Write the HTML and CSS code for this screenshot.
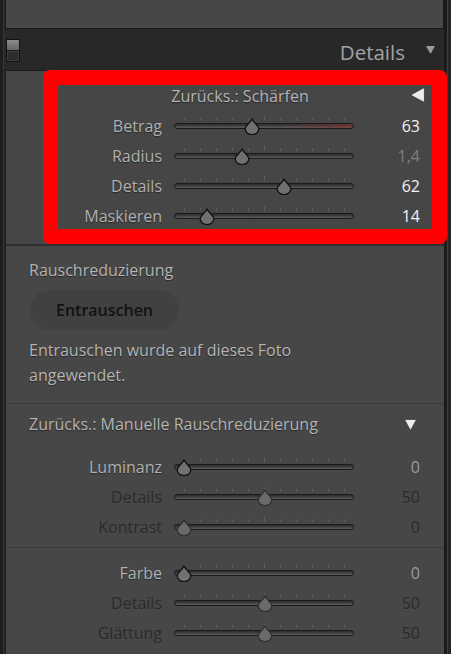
FILE: index.html
```html
<!DOCTYPE html>
<html lang="de">
<head>
<meta charset="utf-8">
<title>Details</title>
<link rel="stylesheet" href="styles.css">
</head>
<body>
<div class="app">
  <div class="col">
    <div class="top-panel"></div>

    <div class="panel-header">
      <div class="toggle"><span class="toggle-top"></span><span class="toggle-bottom"></span></div>
      <span class="panel-title">Details</span>
      <svg class="hdr-tri" width="9" height="9" viewBox="0 0 9 9"><polygon points="0,0 9,0 4.5,8" fill="#9c9c9c"/></svg>
    </div>

    <div class="panel">
      <section class="sec sec-sharpen">
        <div class="sec-head centered">
          <span class="sec-title">Zurücks.: Schärfen</span>
          <svg class="tri-left" width="15" height="16" viewBox="0 0 15 16"><polygon points="0.6,8 14.4,0.6 14.4,15.4" fill="#ececec" stroke="#222" stroke-width="0.6"/></svg>
        </div>
        <div class="row">
          <span class="lbl">Betrag</span>
          <div class="track red"><svg class="thumb" style="left:69px" viewBox="0 0 16 17"><path d="M8 1 C9.5 4.5 14.8 7.5 14.8 11 A6.8 5.6 0 0 1 1.2 11 C1.2 7.5 6.5 4.5 8 1 Z"/></svg></div>
          <span class="val">63</span>
        </div>
        <div class="row">
          <span class="lbl">Radius</span>
          <div class="track"><svg class="thumb" style="left:59px" viewBox="0 0 16 17"><path d="M8 1 C9.5 4.5 14.8 7.5 14.8 11 A6.8 5.6 0 0 1 1.2 11 C1.2 7.5 6.5 4.5 8 1 Z"/></svg></div>
          <span class="val soft">1,4</span>
        </div>
        <div class="row">
          <span class="lbl">Details</span>
          <div class="track"><svg class="thumb" style="left:101px" viewBox="0 0 16 17"><path d="M8 1 C9.5 4.5 14.8 7.5 14.8 11 A6.8 5.6 0 0 1 1.2 11 C1.2 7.5 6.5 4.5 8 1 Z"/></svg></div>
          <span class="val">62</span>
        </div>
        <div class="row">
          <span class="lbl">Maskieren</span>
          <div class="track"><svg class="thumb" style="left:24px" viewBox="0 0 16 17"><path d="M8 1 C9.5 4.5 14.8 7.5 14.8 11 A6.8 5.6 0 0 1 1.2 11 C1.2 7.5 6.5 4.5 8 1 Z"/></svg></div>
          <span class="val">14</span>
        </div>
      </section>

      <section class="sec sec-noise">
        <div class="plain-title">Rauschreduzierung</div>
        <button class="pill" type="button">Entrauschen</button>
        <p class="note">Entrauschen wurde auf dieses Foto<br>angewendet.</p>
      </section>

      <section class="sec sec-manual">
        <div class="sec-head">
          <span class="sec-title left">Zurücks.: Manuelle Rauschreduzierung</span>
          <svg class="tri-down" width="13" height="12" viewBox="0 0 13 12"><polygon points="0.5,0.5 12.5,0.5 6.5,11.5" fill="#ececec" stroke="#222" stroke-width="0.6"/></svg>
        </div>
        <div class="row">
          <span class="lbl">Luminanz</span>
          <div class="track"><svg class="thumb" style="left:1px" viewBox="0 0 16 17"><path d="M8 1 C9.5 4.5 14.8 7.5 14.8 11 A6.8 5.6 0 0 1 1.2 11 C1.2 7.5 6.5 4.5 8 1 Z"/></svg></div>
          <span class="val mid">0</span>
        </div>
        <div class="row off">
          <span class="lbl">Details</span>
          <div class="track"><svg class="thumb" style="left:82px" viewBox="0 0 16 17"><path d="M8 1 C9.5 4.5 14.8 7.5 14.8 11 A6.8 5.6 0 0 1 1.2 11 C1.2 7.5 6.5 4.5 8 1 Z"/></svg></div>
          <span class="val">50</span>
        </div>
        <div class="row off">
          <span class="lbl">Kontrast</span>
          <div class="track"><svg class="thumb" style="left:1px" viewBox="0 0 16 17"><path d="M8 1 C9.5 4.5 14.8 7.5 14.8 11 A6.8 5.6 0 0 1 1.2 11 C1.2 7.5 6.5 4.5 8 1 Z"/></svg></div>
          <span class="val">0</span>
        </div>
      </section>

      <section class="sec sec-color">
        <div class="row">
          <span class="lbl">Farbe</span>
          <div class="track"><svg class="thumb" style="left:1px" viewBox="0 0 16 17"><path d="M8 1 C9.5 4.5 14.8 7.5 14.8 11 A6.8 5.6 0 0 1 1.2 11 C1.2 7.5 6.5 4.5 8 1 Z"/></svg></div>
          <span class="val mid">0</span>
        </div>
        <div class="row off">
          <span class="lbl">Details</span>
          <div class="track"><svg class="thumb" style="left:82px" viewBox="0 0 16 17"><path d="M8 1 C9.5 4.5 14.8 7.5 14.8 11 A6.8 5.6 0 0 1 1.2 11 C1.2 7.5 6.5 4.5 8 1 Z"/></svg></div>
          <span class="val">50</span>
        </div>
        <div class="row off">
          <span class="lbl">Glättung</span>
          <div class="track"><svg class="thumb" style="left:82px" viewBox="0 0 16 17"><path d="M8 1 C9.5 4.5 14.8 7.5 14.8 11 A6.8 5.6 0 0 1 1.2 11 C1.2 7.5 6.5 4.5 8 1 Z"/></svg></div>
          <span class="val">50</span>
        </div>
      </section>
    </div>
  </div>
  <div class="scroll"></div>

  <div class="highlight"></div>
</div>
</body>
</html>
```

FILE: styles.css
```css
* { box-sizing: border-box; }

html, body {
  margin: 0;
  padding: 0;
  background: #262626;
  overflow: hidden;
}

body {
  width: 451px;
  height: 654px;
  font-family: "Open Sans", "Noto Sans", sans-serif;
  font-size: 16px;
  color: #b2b2b2;
}

.app {
  position: relative;
  display: flex;
  height: 654px;
}

.col {
  width: 444px;
  padding-left: 5px;
  display: flex;
  flex-direction: column;
  background: #272727;
  box-shadow: inset 3px 0 0 #1e1e1e, inset 4px 0 0 #363636;
}

.scroll {
  width: 7px;
  background: #252525;
  box-shadow: inset 3px 0 0 #1b1b1b, inset 4px 0 0 #3e3e3e;
}

.top-panel {
  height: 29px;
  background: #474747;
  border: 1px solid #191919;
  border-top: none;
}

.panel-header {
  height: 41px;
  display: flex;
  align-items: center;
  padding: 0 9px 0 1px;
  background: #282828;
}

.toggle {
  width: 14px;
  height: 23px;
  display: flex;
  flex-direction: column;
  border: 1px solid #121212;
  margin-top: 1px;
}

.toggle-top {
  height: 11px;
  background: linear-gradient(#8a8a8a, #666);
  border-bottom: 1px solid #1a1a1a;
}

.toggle-bottom {
  flex: 1;
  background: #2c2c2c;
  box-shadow: inset 0 0 0 1px #3c3c3c;
}

.panel-title {
  margin-left: auto;
  font-size: 20.5px;
  color: #a2a2a2;
  margin-top: 4px;
}

.hdr-tri {
  margin-left: 21px;
  margin-top: 1px;
}

.panel {
  flex: 1;
  background: #474747;
  border-top: 1px solid #1d1d1d;
  border-left: 1px solid #1c1c1c;
  display: flex;
  flex-direction: column;
}

.sec {
  display: flex;
  flex-direction: column;
}

.sec-sharpen {
  padding: 10px 0 13px;
  border-bottom: 2px solid #2f2f2f;
  background: #464646;
}

.sec-head {
  height: 30px;
  display: flex;
  align-items: center;
}

.sec-head.centered {
  padding: 0 19px 0 64px;
}

.sec-title {
  flex: 1;
  text-align: center;
  color: #b4b4b4;
  text-shadow: 0 1px 1px rgba(0, 0, 0, 0.45);
}

.sec-title.left {
  text-align: left;
}

.tri-left {
  margin-top: -3px;
}

.row {
  height: 30px;
  display: flex;
  align-items: center;
}

.lbl {
  width: 156px;
  text-align: right;
  color: #b0b0b0;
  text-shadow: 0 1px 1px rgba(0, 0, 0, 0.45);
  line-height: 20px;
}

.track {
  position: relative;
  width: 180px;
  height: 6px;
  margin-left: 12px;
  border: 1px solid #1b1b1b;
  border-radius: 3px;
  background: linear-gradient(#2d2d2d, #3b3b3b 40%, #5e5e5e);
}

.track.red {
  background:
    linear-gradient(to right, rgba(0,0,0,0) 60%, rgba(130, 50, 50, 0.65)),
    linear-gradient(#2d2d2d, #3b3b3b 40%, #5e5e5e);
}

.track::before {
  content: "";
  position: absolute;
  left: 9px;
  top: -6px;
  width: 161px;
  height: 3px;
  background: repeating-linear-gradient(to right, #5d5d5d 0 1px, transparent 1px 16px);
}

.track::after {
  content: "";
  position: absolute;
  left: 89px;
  top: -8px;
  width: 1px;
  height: 5px;
  background: #5d5d5d;
}

.thumb {
  position: absolute;
  top: -6px;
  width: 16px;
  height: 17px;
  z-index: 1;
}

.thumb path {
  fill: #707070;
  stroke: #111;
  stroke-width: 1.3;
}

.val {
  width: 66px;
  text-align: right;
  color: #f2f2f2;
  line-height: 20px;
}

.val.soft { color: #7e7e7e; }
.val.mid { color: #9c9c9c; }

.row.off .lbl,
.row.off .val {
  color: #2a2a2a;
  text-shadow: 0 1px 0 rgba(255, 255, 255, 0.04);
}

.row.off .thumb path {
  fill: #6a6a6a;
  stroke: #303030;
}

.sec-noise {
  padding: 14px 0 15px 23px;
  border-bottom: 1px solid #3a3a3a;
  align-items: flex-start;
}

.plain-title {
  line-height: 20px;
  color: #b4b4b4;
  text-shadow: 0 1px 1px rgba(0, 0, 0, 0.45);
}

.pill {
  margin-top: 10px;
  margin-left: 1px;
  width: 149px;
  height: 40px;
  border: none;
  border-radius: 20px;
  background: #414141;
  font-family: "Open Sans", "Noto Sans", sans-serif;
  font-size: 16px;
  font-weight: 600;
  color: #121212;
}

.note {
  margin: 8px 0 0;
  line-height: 25px;
  color: #b4b4b4;
  text-shadow: 0 1px 1px rgba(0, 0, 0, 0.45);
}

.sec-manual {
  padding: 8px 0 5px;
  border-bottom: 1px solid #3a3a3a;
}

.sec-manual .sec-head {
  height: 24px;
  padding: 0 27px 0 23px;
  margin-bottom: 16px;
}

.tri-down {
  margin-top: 1px;
}

.sec-color {
  padding-top: 10px;
}

.highlight {
  position: absolute;
  left: 43px;
  top: 70px;
  width: 404px;
  height: 174px;
  border-style: solid;
  border-color: #ff0000;
  border-width: 15px;
  border-radius: 7px;
  pointer-events: none;
}
```
